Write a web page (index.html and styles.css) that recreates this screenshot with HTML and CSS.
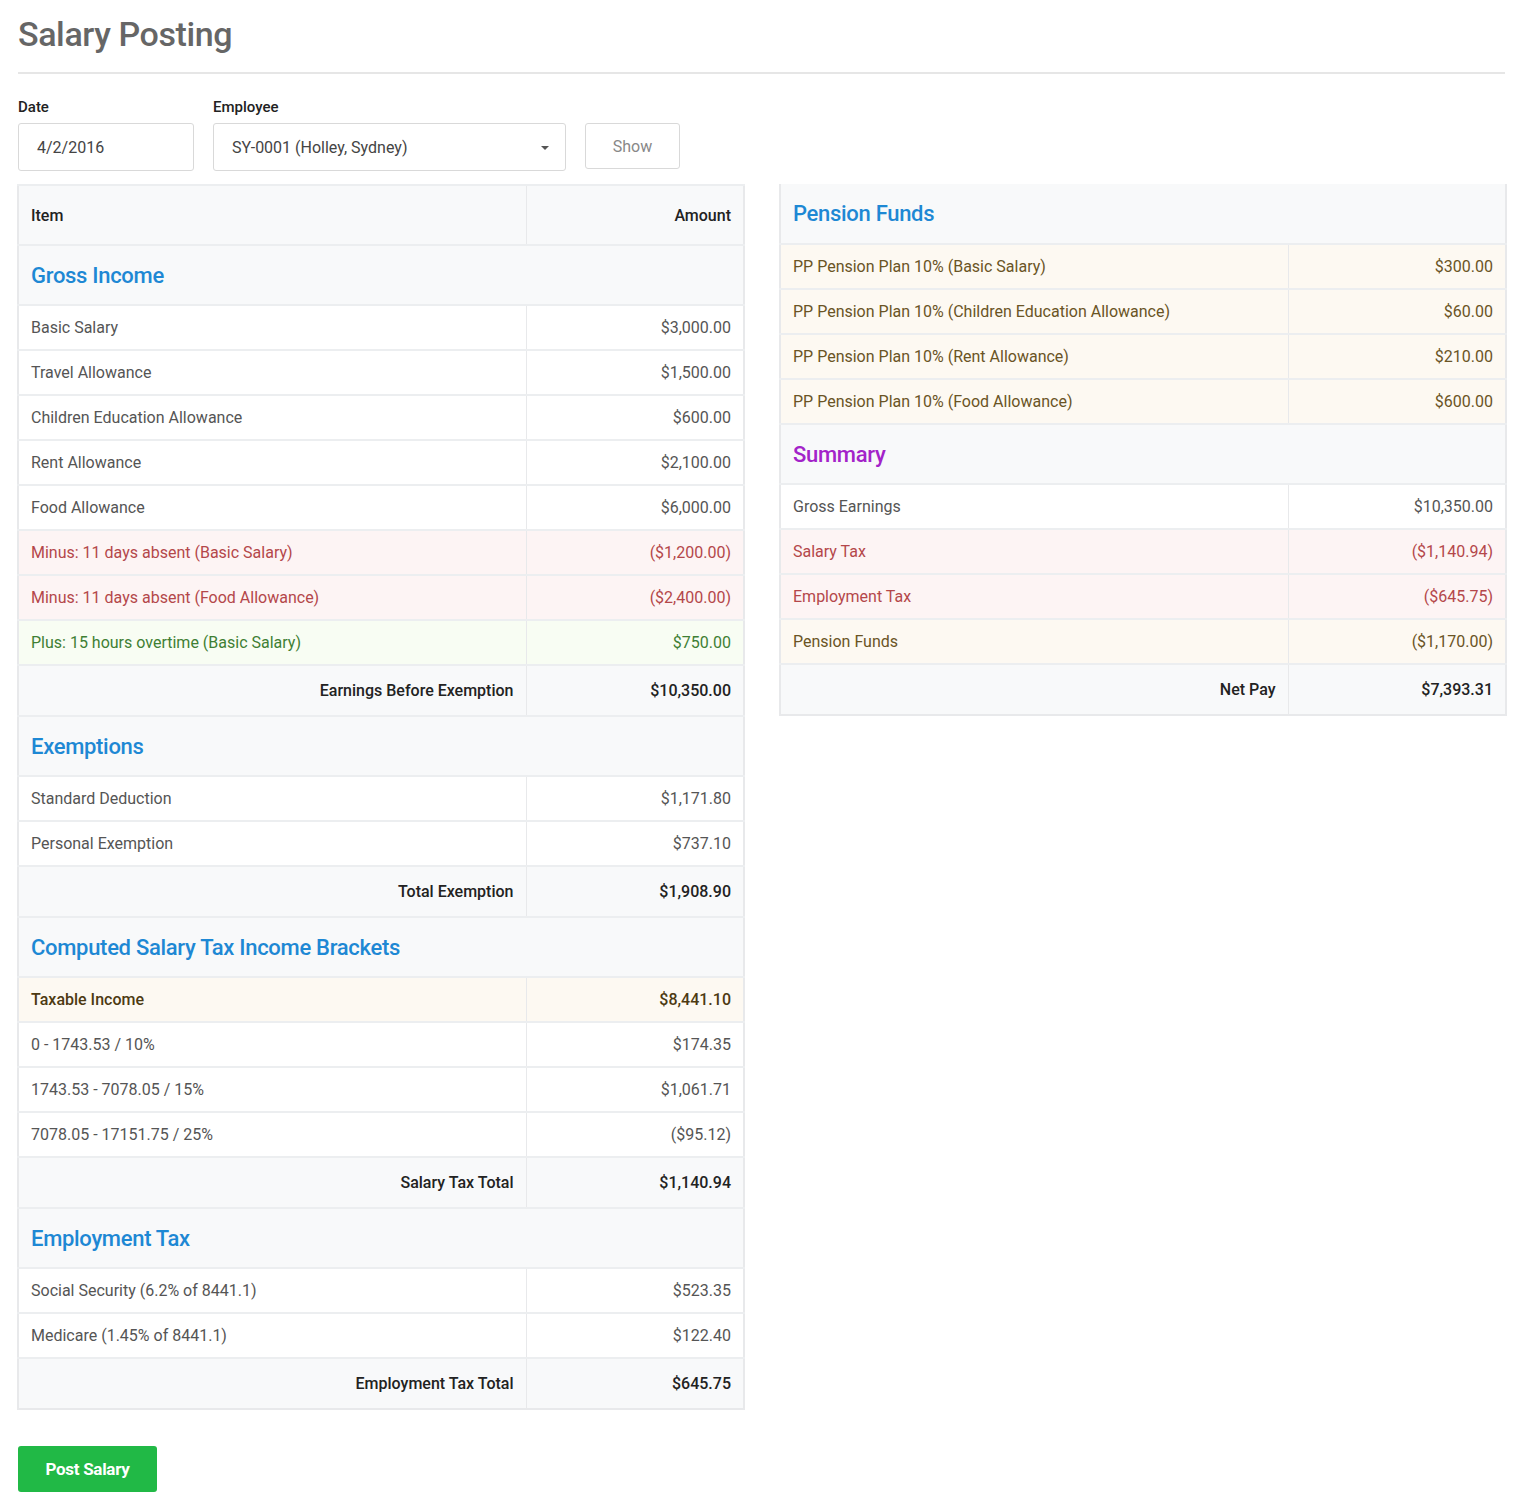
FILE: index.html
```html
<!DOCTYPE html>
<html>
<head>
<meta charset="utf-8">
<title>Salary Posting</title>
<link rel="stylesheet" href="styles.css">
</head>
<body>
<div class="page">
  <h1 class="title">Salary Posting</h1>
  <hr class="rule">
  <form class="filters">
    <div class="field">
      <label class="label">Date</label>
      <div class="input date">4/2/2016</div>
    </div>
    <div class="field">
      <label class="label">Employee</label>
      <div class="input select">SY-0001 (Holley, Sydney)<span class="caret"></span></div>
    </div>
    <div class="field">
      <span class="label">&nbsp;</span>
      <button type="button" class="btn-show">Show</button>
    </div>
  </form>

  <div class="columns">
    <div class="col">
      <table class="grid with-top">
        <colgroup><col class="c-item"><col class="c-amt"></colgroup>
        <tr class="head"><td>Item</td><td class="num">Amount</td></tr>
        <tr class="section"><td colspan="2"><span class="sec-title blue">Gross Income</span></td></tr>
        <tr><td>Basic Salary</td><td class="num">$3,000.00</td></tr>
        <tr><td>Travel Allowance</td><td class="num">$1,500.00</td></tr>
        <tr><td>Children Education Allowance</td><td class="num">$600.00</td></tr>
        <tr><td>Rent Allowance</td><td class="num">$2,100.00</td></tr>
        <tr><td>Food Allowance</td><td class="num">$6,000.00</td></tr>
        <tr class="danger"><td>Minus: 11 days absent (Basic Salary)</td><td class="num">($1,200.00)</td></tr>
        <tr class="danger"><td>Minus: 11 days absent (Food Allowance)</td><td class="num">($2,400.00)</td></tr>
        <tr class="success"><td>Plus: 15 hours overtime (Basic Salary)</td><td class="num">$750.00</td></tr>
        <tr class="total"><td class="num">Earnings Before Exemption</td><td class="num">$10,350.00</td></tr>

        <tr class="section"><td colspan="2"><span class="sec-title blue">Exemptions</span></td></tr>
        <tr><td>Standard Deduction</td><td class="num">$1,171.80</td></tr>
        <tr><td>Personal Exemption</td><td class="num">$737.10</td></tr>
        <tr class="total"><td class="num">Total Exemption</td><td class="num">$1,908.90</td></tr>

        <tr class="section"><td colspan="2"><span class="sec-title blue">Computed Salary Tax Income Brackets</span></td></tr>
        <tr class="warning strong"><td>Taxable Income</td><td class="num">$8,441.10</td></tr>
        <tr><td>0 - 1743.53 / 10%</td><td class="num">$174.35</td></tr>
        <tr><td>1743.53 - 7078.05 / 15%</td><td class="num">$1,061.71</td></tr>
        <tr><td>7078.05 - 17151.75 / 25%</td><td class="num">($95.12)</td></tr>
        <tr class="total"><td class="num">Salary Tax Total</td><td class="num">$1,140.94</td></tr>

        <tr class="section"><td colspan="2"><span class="sec-title blue">Employment Tax</span></td></tr>
        <tr><td>Social Security (6.2% of 8441.1)</td><td class="num">$523.35</td></tr>
        <tr><td>Medicare (1.45% of 8441.1)</td><td class="num">$122.40</td></tr>
        <tr class="total"><td class="num">Employment Tax Total</td><td class="num">$645.75</td></tr>
      </table>
    </div>

    <div class="col">
      <table class="grid">
        <colgroup><col class="c-item"><col class="c-amt"></colgroup>
        <tr class="section first"><td colspan="2"><span class="sec-title blue">Pension Funds</span></td></tr>
        <tr class="warning"><td>PP Pension Plan 10% (Basic Salary)</td><td class="num">$300.00</td></tr>
        <tr class="warning"><td>PP Pension Plan 10% (Children Education Allowance)</td><td class="num">$60.00</td></tr>
        <tr class="warning"><td>PP Pension Plan 10% (Rent Allowance)</td><td class="num">$210.00</td></tr>
        <tr class="warning"><td>PP Pension Plan 10% (Food Allowance)</td><td class="num">$600.00</td></tr>

        <tr class="section"><td colspan="2"><span class="sec-title purple">Summary</span></td></tr>
        <tr><td>Gross Earnings</td><td class="num">$10,350.00</td></tr>
        <tr class="danger"><td>Salary Tax</td><td class="num">($1,140.94)</td></tr>
        <tr class="danger"><td>Employment Tax</td><td class="num">($645.75)</td></tr>
        <tr class="warning"><td>Pension Funds</td><td class="num">($1,170.00)</td></tr>
        <tr class="total"><td class="num">Net Pay</td><td class="num">$7,393.31</td></tr>
      </table>
    </div>
  </div>

  <div class="actions">
    <button type="button" class="btn-post">Post Salary</button>
  </div>
</div>
</body>
</html>
```

FILE: styles.css
```css
* { box-sizing: border-box; }
body {
  margin: 8px;
  font-family: Roboto, "Open Sans", Arial, sans-serif;
  font-size: 16px;
  color: #555;
  background: #fff;
}
.page {
  margin-left: 10px;
  width: 1487px;
}
.title {
  margin: 6px 0 0;
  font-size: 34px;
  line-height: 40px;
  font-weight: 500;
  color: #666;
  letter-spacing: -0.4px;
}
.rule {
  margin: 18px 0 0;
  border: 0;
  border-top: 2px solid #e6e6e6;
  height: 0;
}
.filters {
  display: flex;
  gap: 19px;
  margin-top: 22px;
}
.field {
  display: flex;
  flex-direction: column;
}
.label {
  font-size: 15px;
  line-height: 22px;
  font-weight: 500;
  color: #222;
  margin-bottom: 5px;
}
.input {
  height: 48px;
  border: 1px solid #d9d9d9;
  border-radius: 3px;
  padding: 0 18px;
  display: flex;
  align-items: center;
  font-size: 16px;
  color: #444;
}
.date { width: 176px; }
.select {
  width: 353px;
  position: relative;
}
.caret {
  position: absolute;
  right: 16px;
  top: 22px;
  width: 0;
  height: 0;
  border-left: 4px solid transparent;
  border-right: 4px solid transparent;
  border-top: 4px solid #555;
}
.btn-show {
  width: 95px;
  height: 46px;
  border: 1px solid #d9d9d9;
  border-radius: 3px;
  background: #fff;
  font-family: inherit;
  font-size: 16px;
  color: #888;
}
.columns {
  display: grid;
  grid-template-columns: 726px 726px;
  column-gap: 36px;
  margin-top: 13px;
  margin-left: -1px;
  align-items: start;
}
.grid {
  width: 100%;
  border-collapse: collapse;
  table-layout: fixed;
  border-left: 2px solid #e8e9eb;
  border-right: 2px solid #e8e9eb;
  border-bottom: 2px solid #e8e9eb;
}
.grid.with-top { border-top: 2px solid #e8e9eb; }
.c-item { width: 508px; }
.c-amt { width: 218px; }
.grid td {
  height: 45px;
  padding: 0 12px;
  border-top: 2px solid #eceef0;
  border-left: 1px solid #e8e9eb;
  vertical-align: middle;
  font-size: 16px;
  color: #555;
  white-space: nowrap;
}
.grid .first td { border-top: 0; }
.grid .num { text-align: right; }
.grid .head td {
  height: 60px;
  background: #f8f9fa;
  color: #222;
  font-weight: 500;
}
.grid .section td {
  height: 60px;
  background: #f8f9fa;
}
.sec-title {
  font-size: 22px;
  font-weight: 500;
  letter-spacing: -0.3px;
}
.blue { color: #1e88d4; }
.purple { color: #a323c9; }
.grid .total td {
  height: 51px;
  background: #f8f9fa;
  color: #222;
  font-weight: 500;
}
.grid .danger td {
  background: #fdf4f4;
  color: #b4474a;
}
.grid .success td {
  background: #f8fdf3;
  color: #3f7f34;
}
.grid .warning td {
  background: #fdf9f2;
  color: #6a5425;
}
.grid .warning.strong td {
  color: #4d3a12;
  font-weight: 500;
}
.actions {
  margin-top: 36px;
}
.btn-post {
  width: 139px;
  height: 46px;
  border: 0;
  border-radius: 3px;
  background: #21b946;
  color: #fff;
  font-family: inherit;
  font-size: 17px;
  font-weight: 700;
  letter-spacing: -0.3px;
}
```
